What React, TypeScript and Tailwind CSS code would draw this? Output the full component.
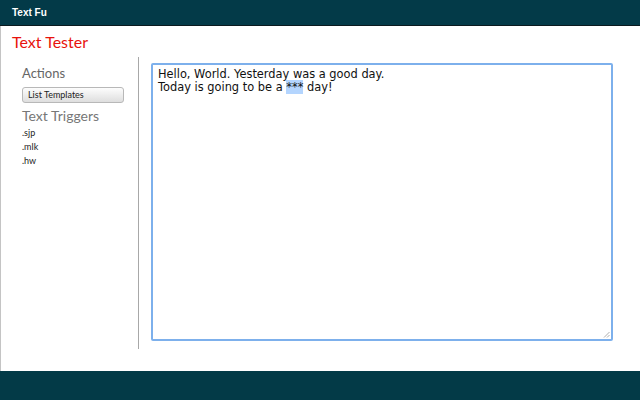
import React from "react";

export default function App() {
  return (
    <div className="w-[640px] h-[400px] flex flex-col bg-white overflow-hidden" style={{ fontFamily: '"DejaVu Sans", sans-serif' }}>
      <div className="h-[26px] shrink-0 bg-[#033a48] border-b border-[#0b1a1f] flex items-center px-[12px]">
        <span className="text-white text-[10px] font-bold" style={{ fontFamily: '"Liberation Sans", sans-serif' }}>Text Fu</span>
      </div>
      <div className="flex-1 flex flex-col border-l border-[#c4c4c4]">
        <div className="h-[30px] shrink-0 pl-[11px] pt-[6px]">
          <h1 className="text-[#e8120c] text-[16px] leading-[20px]" style={{ fontFamily: '"Lato", sans-serif' }}>Text Tester</h1>
        </div>
        <div className="flex-1 flex pb-[22px]">
          <div className="w-[138px] shrink-0 border-r border-[#a8a8a8] pl-[21px] pt-[8px] mt-[1px]">
            <div className="text-[#666] text-[13px] leading-[16px]" style={{ fontFamily: '"Lato", sans-serif' }}>Actions</div>
            <button className="mt-[5px] w-[102px] h-[16px] rounded-[3px] border border-[#b8b8b8] bg-gradient-to-b from-[#fdfdfd] to-[#dedede] text-left pl-[5px] text-[9px] text-[#222] leading-[14px]" style={{ fontFamily: '"Lato", sans-serif' }}>List Templates</button>
            <div className="mt-[2px] text-[#777] text-[14px] leading-[18px]" style={{ fontFamily: '"Lato", sans-serif' }}>Text Triggers</div>
            <div className="mt-[1px] flex flex-col text-[9px] leading-[14px] text-[#222]" style={{ fontFamily: '"Lato", sans-serif' }}>
              <span>.sjp</span>
              <span>.mlk</span>
              <span>.hw</span>
            </div>
          </div>
          <div className="pl-[12px] pt-[7px] pb-[6px] flex-1 flex">
            <div className="relative w-[462px] h-[278px] border-2 border-[#7db0ec] rounded-[2px] px-[5px] py-[3px] text-[11.4px] leading-[13px] text-[#111]">
              <div>Hello, World. Yesterday was a good day.</div>
              <div>Today is going to be a <span className="bg-[#b4d5fe]">***</span> day!</div>
              <svg className="absolute right-[1px] bottom-[1px]" width="7" height="7" viewBox="0 0 7 7">
                <line x1="1" y1="6.5" x2="6.5" y2="1" stroke="#999" strokeWidth="0.8" />
                <line x1="4" y1="6.5" x2="6.5" y2="4" stroke="#999" strokeWidth="0.8" />
              </svg>
            </div>
          </div>
        </div>
      </div>
      <div className="h-[29px] shrink-0 bg-[#033a47]" />
    </div>
  );
}
